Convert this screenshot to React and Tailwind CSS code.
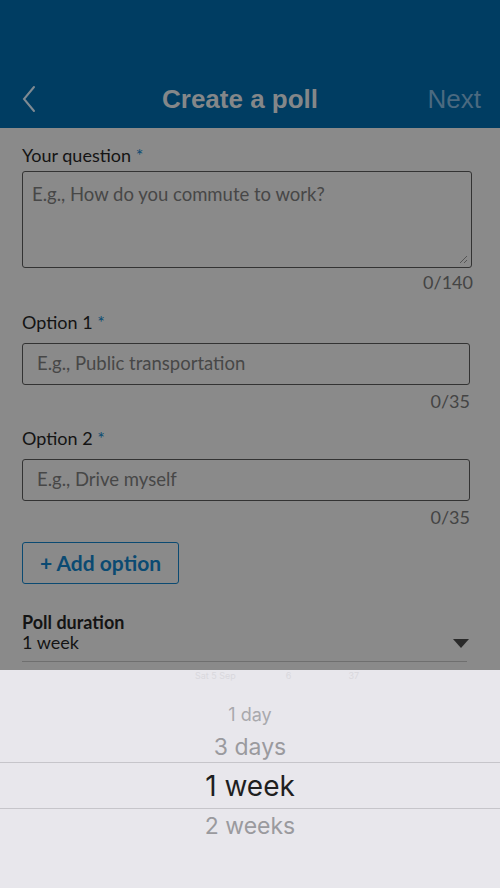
import React from 'react';

function Label({ text, required }) {
  return (
    <p className="text-[18px] leading-[22px] text-[#141414]">
      {text}
      {required && <span className="text-[#0b4a72]"> *</span>}
    </p>
  );
}

function Counter({ value }) {
  return <p className="text-right text-[18px] leading-[22px] text-[#444]">{value}</p>;
}

export default function App() {
  return (
    <div
      className="flex h-screen w-full flex-col bg-[#8a8a8a]"
      style={{ fontFamily: 'Lato, "Open Sans", sans-serif' }}
    >
      {/* header */}
      <div className="flex h-[128px] shrink-0 items-center bg-[#003d62] px-[22px] pt-[70px]">
        <div className="w-[140px]">
          <svg width="14" height="28" viewBox="0 0 14 28" fill="none">
            <path d="M12 2 L2 14 L12 26" stroke="#7f8a92" strokeWidth="2" strokeLinecap="round" />
          </svg>
        </div>
        <h1
          className="flex-1 text-[26px] font-bold text-[#848789]"
          style={{ fontFamily: '"Liberation Sans", Arial, sans-serif' }}
        >
          Create a poll
        </h1>
        <div
          className="text-right text-[26px] text-[#4b6a80] -mr-[3px]"
          style={{ fontFamily: '"Liberation Sans", Arial, sans-serif' }}
        >
          Next
        </div>
      </div>

      {/* form */}
      <div className="flex-1 pl-[22px] pr-[28px] pt-[16px]">
        <Label text="Your question" required />
        <div className="relative mt-[5px] h-[97px] rounded-[3px] border-[1.5px] border-[#333] px-[9px] pt-[9px]">
          <p className="text-[18.5px] leading-[26px] text-[#474747]">E.g., How do you commute to work?</p>
          <svg className="absolute bottom-[3px] right-[3px]" width="10" height="10" viewBox="0 0 10 10">
            <path d="M9 2 L2 9 M9 6 L6 9" stroke="#555" strokeWidth="1" />
          </svg>
        </div>
        <div className="mt-[3px] -mr-[1px]">
          <Counter value="0/140" />
        </div>

        <div className="mt-[18px]">
          <Label text="Option 1" required />
        </div>
        <div className="mt-[10px] flex h-[42px] items-center rounded-[3px] border-[1.5px] border-[#333] pl-[14px] mr-[2px]">
          <p className="text-[18.5px] text-[#474747]">E.g., Public transportation</p>
        </div>
        <div className="mt-[5px] mr-[2px]">
          <Counter value="0/35" />
        </div>

        <div className="mt-[15px]">
          <Label text="Option 2" required />
        </div>
        <div className="mt-[10px] flex h-[42px] items-center rounded-[3px] border-[1.5px] border-[#333] pl-[14px] mr-[2px]">
          <p className="text-[18.5px] text-[#474747]">E.g., Drive myself</p>
        </div>
        <div className="mt-[5px] mr-[2px]">
          <Counter value="0/35" />
        </div>

        <button className="mt-[14px] flex h-[42px] w-[157px] items-center justify-center rounded-[3px] border-[1.5px] border-[#0b4a72] text-[21px] font-bold text-[#0b4a72]">
          + Add option
        </button>

        <div className="mt-[28px] mr-[5px] flex items-end border-b border-[#6f6f6f] pb-[9px]">
          <div className="flex-1">
            <p className="text-[18px] font-bold leading-[20px] text-[#141414]">Poll duration</p>
            <p className="text-[18px] leading-[20px] text-[#141414]">1 week</p>
          </div>
          <svg className="mb-[4px] -mr-[2px]" width="16" height="9" viewBox="0 0 16 9">
            <path d="M0 0 H16 L8 9 Z" fill="#2a2a2a" />
          </svg>
        </div>
      </div>

      {/* picker */}
      <div
        className="flex h-[218px] shrink-0 flex-col bg-[#e8e7ec]"
        style={{ fontFamily: 'Inter, Roboto, sans-serif' }}
      >
        <div className="flex h-[12px] items-center text-[9px] text-[#d9d8dd]">
          <span className="ml-[195px]">Sat 5 Sep</span>
          <span className="ml-[50px]">6</span>
          <span className="ml-[57px]">37</span>
        </div>
        <p className="mt-[21px] text-center text-[18px] leading-[24px] text-[#a9a9ad]">1 day</p>
        <p className="mt-[8px] text-center text-[23px] leading-[24px] text-[#9a9a9e]">3 days</p>
        <div className="mt-[3px] flex h-[47px] items-center justify-center border-y border-[#c6c5ca]">
          <p className="text-[28px] text-[#1f1f1f]">1 week</p>
        </div>
        <p className="mt-[5px] text-center text-[23px] leading-[24px] text-[#9a9a9e]">2 weeks</p>
      </div>
    </div>
  );
}
